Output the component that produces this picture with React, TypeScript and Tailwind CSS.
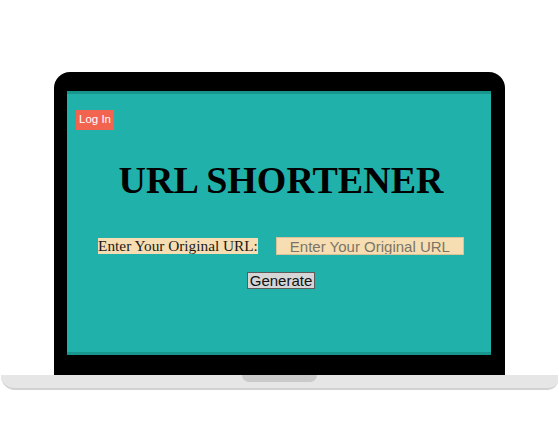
export default function App() {
    return (
        <div className="w-[559px] h-[447px] bg-white pt-[72px] overflow-hidden">
            {/* laptop lid */}
            <div className="ml-[54px] w-[451px] h-[303px] bg-black rounded-t-[16px] pt-[19px] pl-[13px] pr-[14px] pb-[20px]">
                <div className="h-full bg-[#20b2aa] border-t-[3px] border-b-[3px] border-[#17958e] flex flex-col items-center pl-[4px]">
                    <div className="self-start flex ml-[5px] mt-[16px]">
                        <button className="h-[20px] px-[3px] bg-[#f26450] text-white text-[11.5px] leading-none font-['Liberation_Sans',Arial,sans-serif]">
                            Log In
                        </button>
                    </div>

                    <h1 className="mt-[29px] text-[38px] font-bold leading-[42px] text-black font-['Liberation_Serif','Times_New_Roman',serif]">
                        URL SHORTENER
                    </h1>

                    <div className="mt-[36px] flex items-center">
                        <span className="bg-[#f7deb2] text-[15.3px] leading-[16px] text-[#1a1a1a] font-['Liberation_Serif','Times_New_Roman',serif]">
                            Enter Your Original URL:
                        </span>
                        <input
                            className="ml-[18px] w-[188px] h-[18px] bg-[#f7deb2] border border-[#d8c29a] text-center text-[15px] leading-none text-black placeholder:text-[#7a7568] font-['Liberation_Sans',Arial,sans-serif] outline-none"
                            placeholder="Enter Your Original URL"
                        />
                    </div>

                    <button className="mt-[17px] h-[17px] px-[2px] bg-[#d6d6d6] border border-[#5c5c5c] text-[15px] leading-none text-[#111] font-['Liberation_Sans',Arial,sans-serif]">
                        Generate
                    </button>
                </div>
            </div>

            {/* laptop base */}
            <div className="ml-[1px] w-[557px] h-[15px] bg-[#e6e6e6] rounded-bl-[14px] rounded-br-[10px] border-b-2 border-[#d2d2d2] flex justify-center">
                <div className="w-[75px] h-[7px] bg-[#cacaca] rounded-b-[7px]" />
            </div>
        </div>
    );
}
